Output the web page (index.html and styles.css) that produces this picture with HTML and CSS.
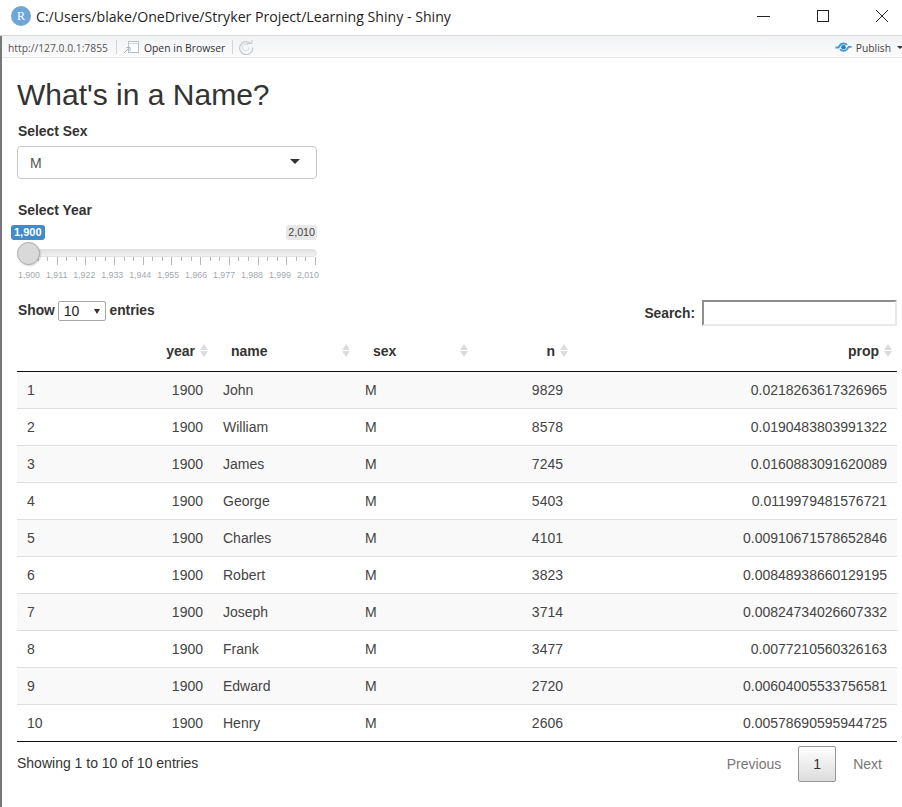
FILE: index.html
```html
<!DOCTYPE html>
<html lang="en">
<head>
<meta charset="utf-8">
<title>What's in a Name?</title>
<link rel="stylesheet" href="styles.css">
</head>
<body>
<div class="window">
  <header class="titlebar">
    <span class="r-logo">R</span>
    <span class="title-text">C:/Users/blake/OneDrive/Stryker Project/Learning Shiny - Shiny</span>
    <div class="win-controls">
      <svg class="win-icon" width="16" height="16" viewBox="0 0 16 16"><path d="M1 8.5H14" stroke="#222" fill="none"/></svg>
      <svg class="win-icon" width="16" height="16" viewBox="0 0 16 16"><rect x="2.5" y="2.5" width="11" height="11" stroke="#222" fill="none"/></svg>
      <svg class="win-icon" width="16" height="16" viewBox="0 0 16 16"><path d="M2 2L14 14M14 2L2 14" stroke="#222" fill="none"/></svg>
    </div>
  </header>
  <nav class="toolbar">
    <span class="url">http://127.0.0.1:7855</span>
    <span class="tool-sep"></span>
    <svg class="browser-icon" width="16" height="13" viewBox="0 0 16 13"><rect x="5.5" y="0.5" width="10" height="11" fill="#fff" stroke="#b4bec6"/><path d="M5.5 2.5H15.5" stroke="#cdd4da"/><path d="M1 12L6 7M3.5 6.5H7V10" stroke="#a9b3bb" fill="none"/></svg>
    <span class="open-browser">Open in Browser</span>
    <span class="tool-sep"></span>
    <svg class="refresh-icon" width="16" height="16" viewBox="0 0 16 16"><path d="M12.5 4.2A6.5 6.5 0 1 0 14.7 8.5" stroke="#c3cbd1" stroke-width="1.3" fill="none"/><path d="M11 8.5A3.4 3.4 0 1 1 10.2 6" stroke="#d3d8dc" fill="none"/><path d="M9 4.5H14V1" stroke="#c3cbd1" fill="none"/></svg>
    <div class="publish">
      <svg class="publish-icon" width="17" height="12" viewBox="0 0 17 12"><path d="M0.5 6.5H3.5C5 3.5 7 2.5 8.5 2.5C10 2.5 11.2 3 12 4" stroke="#3f9bd1" stroke-width="1.8" fill="none"/><path d="M16.5 5.8H13.5C12 8.8 10 9.8 8.5 9.8C7 9.8 5.8 9.3 5 8.3" stroke="#3f9bd1" stroke-width="1.8" fill="none"/><circle cx="8.5" cy="6.2" r="2.3" fill="#2b7fb8"/></svg>
      <span class="publish-text">Publish</span>
      <span class="publish-caret"></span>
    </div>
  </nav>
  <main class="content">
    <h2 class="page-title">What's in a Name?</h2>
    <div class="field field-select">
      <label class="field-label">Select Sex</label>
      <div class="selectize"><span>M</span><span class="caret"></span></div>
    </div>
    <div class="field field-slider">
      <label class="field-label">Select Year</label>
      <div class="slider">
        <div class="bubbles"><span class="bubble-from">1,900</span><span class="bubble-to">2,010</span></div>
        <div class="track"><span class="handle"></span></div>
        <div class="ticks">
          <span class="tick"></span><span class="tick minor"></span><span class="tick minor"></span>
          <span class="tick"></span><span class="tick minor"></span><span class="tick minor"></span>
          <span class="tick"></span><span class="tick minor"></span><span class="tick minor"></span>
          <span class="tick"></span><span class="tick minor"></span><span class="tick minor"></span>
          <span class="tick"></span><span class="tick minor"></span><span class="tick minor"></span>
          <span class="tick"></span><span class="tick minor"></span><span class="tick minor"></span>
          <span class="tick"></span><span class="tick minor"></span><span class="tick minor"></span>
          <span class="tick"></span><span class="tick minor"></span><span class="tick minor"></span>
          <span class="tick"></span><span class="tick minor"></span><span class="tick minor"></span>
          <span class="tick"></span><span class="tick minor"></span><span class="tick minor"></span>
          <span class="tick"></span>
        </div>
        <div class="tick-labels"><span>1,900</span><span>1,911</span><span>1,922</span><span>1,933</span><span>1,944</span><span>1,955</span><span>1,966</span><span>1,977</span><span>1,988</span><span>1,999</span><span>2,010</span></div>
      </div>
    </div>
    <div class="dt-controls">
      <div class="dt-length">Show <span class="length-select">10<span class="mini-caret"></span></span> entries</div>
      <div class="dt-search">Search: <span class="search-input"></span></div>
    </div>
    <table class="dt">
      <colgroup><col class="c-idx"><col class="c-year"><col class="c-name"><col class="c-sex"><col class="c-n"><col class="c-prop"></colgroup>
      <thead>
        <tr>
          <th></th>
          <th class="num"><span class="th-in">year<span class="sort"></span></span></th>
          <th class="txt"><span class="th-in">name<span class="sort"></span></span></th>
          <th class="txt"><span class="th-in">sex<span class="sort"></span></span></th>
          <th class="num"><span class="th-in">n<span class="sort"></span></span></th>
          <th class="num"><span class="th-in">prop<span class="sort"></span></span></th>
        </tr>
      </thead>
      <tbody>
        <tr><td>1</td><td class="r">1900</td><td>John</td><td>M</td><td class="r">9829</td><td class="r">0.0218263617326965</td></tr>
        <tr><td>2</td><td class="r">1900</td><td>William</td><td>M</td><td class="r">8578</td><td class="r">0.0190483803991322</td></tr>
        <tr><td>3</td><td class="r">1900</td><td>James</td><td>M</td><td class="r">7245</td><td class="r">0.0160883091620089</td></tr>
        <tr><td>4</td><td class="r">1900</td><td>George</td><td>M</td><td class="r">5403</td><td class="r">0.0119979481576721</td></tr>
        <tr><td>5</td><td class="r">1900</td><td>Charles</td><td>M</td><td class="r">4101</td><td class="r">0.00910671578652846</td></tr>
        <tr><td>6</td><td class="r">1900</td><td>Robert</td><td>M</td><td class="r">3823</td><td class="r">0.00848938660129195</td></tr>
        <tr><td>7</td><td class="r">1900</td><td>Joseph</td><td>M</td><td class="r">3714</td><td class="r">0.00824734026607332</td></tr>
        <tr><td>8</td><td class="r">1900</td><td>Frank</td><td>M</td><td class="r">3477</td><td class="r">0.0077210560326163</td></tr>
        <tr><td>9</td><td class="r">1900</td><td>Edward</td><td>M</td><td class="r">2720</td><td class="r">0.00604005533756581</td></tr>
        <tr><td>10</td><td class="r">1900</td><td>Henry</td><td>M</td><td class="r">2606</td><td class="r">0.00578690595944725</td></tr>
      </tbody>
    </table>
    <div class="dt-footer">
      <div class="dt-info">Showing 1 to 10 of 10 entries</div>
      <div class="pager"><span class="page-link">Previous</span><span class="page-current">1</span><span class="page-link page-next">Next</span></div>
    </div>
  </main>
</div>
</body>
</html>
```
FILE: styles.css
```css
* { box-sizing: border-box; }
html, body { margin: 0; padding: 0; background: #fff; }
body { width: 902px; height: 807px; overflow: hidden; font-family: "Liberation Sans", Arial, sans-serif; font-size: 14px; color: #333; }
.window { height: 807px; border-left: 2px solid #777; }
.titlebar { height: 36px; display: flex; align-items: center; padding: 0 0 3px 11px; background: #fff; border-bottom: 1px solid #d9d9d9; margin-left: -2px; }
.r-logo { width: 20px; height: 20px; border-radius: 50%; background: #6ea6d9; color: #fff; font-family: "Liberation Serif", serif; font-size: 12px; text-align: center; line-height: 20px; flex: none; }
.title-text { margin-left: 5px; font-family: "Open Sans", sans-serif; font-size: 14.15px; color: #1f1f1f; white-space: nowrap; }
.win-controls { margin-left: auto; display: flex; gap: 43px; padding-right: 12px; }
.win-icon { display: block; }
.toolbar { height: 22px; display: flex; align-items: center; background: linear-gradient(#f2f3f4, #fbfbfc); border-bottom: 1px solid #e6e6e6; font-family: "Open Sans", sans-serif; font-size: 10.3px; color: #444; padding-left: 6px; }
.url { color: #555; margin-top: 2px; }
.tool-sep { width: 1px; height: 14px; background: #d4d4d4; margin: 0 7px 0 8px; }
.browser-icon { margin: 1px 5px 0 -1px; }
.open-browser { color: #333; font-size: 10.4px; margin: 3px -1px 0 0; }
.refresh-icon { display: block; margin-left: -2px; }
.publish { margin-left: auto; display: flex; align-items: center; gap: 4px; }
.publish-icon { margin-top: 1px; }
.publish-text { color: #444; margin-top: 3px; }
.publish-caret { width: 0; height: 0; border-left: 3px solid transparent; border-right: 3px solid transparent; border-top: 3px solid #333; margin: 2px -1px 0 2px; }
.content { padding: 0 5px 0 15px; }
.page-title { margin: 19px 0 0; font-size: 30px; font-weight: 400; line-height: 35px; }
.field { width: 300px; }
.field-label { display: block; font-weight: 700; font-size: 13.9px; line-height: 16px; padding-left: 1px; }
.field-select { margin-top: 11px; }
.selectize { margin-top: 7px; height: 33px; border: 1px solid #c6c6c6; border-radius: 4px; display: flex; align-items: center; justify-content: space-between; padding: 0 16px 0 12px; color: #555; font-size: 14px; }
.caret { width: 0; height: 0; border-left: 5.5px solid transparent; border-right: 5.5px solid transparent; border-top: 5px solid #333; margin-bottom: 3px; }
.field-slider { margin-top: 23px; }
.slider { margin-top: 7px; }
.bubbles { display: flex; justify-content: space-between; margin-left: -6px; height: 15px; }
.bubble-from, .bubble-to { font-size: 11px; line-height: 15px; padding: 0 3px; border-radius: 3px; }
.bubble-from { background: #428bca; color: #fff; font-weight: 700; }
.bubble-to { background: #e8e8e8; color: #444; padding: 0 2px; font-size: 10.7px; }
.track { position: relative; height: 8px; margin-top: 9px; background: linear-gradient(#e2e2e2, #f1f1f1); border: 1px solid #e2e2e2; border-radius: 4px; }
.handle { position: absolute; left: -1px; top: -8px; width: 23px; height: 23px; border-radius: 50%; background: #d9d9d9; border: 1px solid #ababab; box-shadow: 1px 1px 2px rgba(0,0,0,.15); }
.ticks { display: flex; justify-content: space-between; align-items: flex-start; padding: 0 1px 0 11px; height: 9px; margin-top: 0; }
.tick { width: 1px; height: 8px; background: #b8b8b8; }
.tick.minor { height: 4px; }
.tick-labels { display: flex; justify-content: space-between; font-size: 8.8px; color: #a3a8ad; margin: 4px -2px 0 1px; line-height: 11px; }
.dt-controls { display: flex; justify-content: space-between; align-items: flex-start; margin-top: 18px; font-weight: 700; font-size: 13.8px; height: 30px; }
.dt-length { padding: 2px 0 0 1px; line-height: 20px; }
.length-select { display: inline-flex; width: 48px; height: 20px; margin-left: -1px; border: 1px solid #a8a8a8; border-radius: 2px; align-items: center; justify-content: space-between; padding: 0 5px; font-weight: 400; font-size: 14px; vertical-align: top; color: #222; }
.mini-caret { width: 0; height: 0; border-left: 3px solid transparent; border-right: 3px solid transparent; border-top: 5px solid #333; }
.dt-search { display: flex; align-items: center; gap: 7px; padding-top: 1px; }
.search-input { width: 195px; height: 26px; border: 2px solid #eaeaea; border-top-color: #8f8f8f; border-left-color: #8f8f8f; }
.dt { width: 880px; border-collapse: collapse; table-layout: fixed; margin-top: 0; font-size: 14px; }
.c-idx { width: 96px; } .c-year { width: 100px; } .c-name { width: 142px; } .c-sex { width: 118px; } .c-n { width: 100px; } .c-prop { width: 324px; }
thead th { height: 42px; border-bottom: 1px solid #111; font-weight: 700; padding: 2px 0 0; }
.th-in { display: flex; align-items: center; gap: 4px; }
th.num .th-in { justify-content: flex-end; padding-right: 5px; }
th.txt .th-in { justify-content: space-between; padding: 0 5px 0 18px; }
.sort { display: flex; flex-direction: column; gap: 1px; width: 9px; align-items: center; }
.sort::before, .sort::after { content: ""; width: 0; height: 0; border-left: 4px solid transparent; border-right: 4px solid transparent; }
.sort::before { border-bottom: 6px solid #dcdcdc; }
.sort::after { border-top: 6px solid #dcdcdc; }
tbody td { height: 37px; padding: 0 10px; border-top: 1px solid #ddd; color: #444; }
tbody tr:first-child td { border-top: none; height: 37px; }
tbody tr:nth-child(odd) { background: #f9f9f9; }
tbody td.r { text-align: right; }
tbody { border-bottom: 1px solid #111; }
.dt-footer { display: flex; justify-content: space-between; align-items: flex-start; margin-top: 4px; }
.dt-info { padding-top: 9px; color: #333; line-height: 17px; }
.pager { display: flex; align-items: center; color: #777; }
.page-link { padding: 0 17px 0 0; color: #777; }
.page-next { padding: 0 15px 0 17px; }
.page-current { width: 38px; height: 36px; display: flex; align-items: center; justify-content: center; border: 1px solid #979797; border-radius: 2px; background: linear-gradient(#fff, #dcdcdc); color: #333; }
```
